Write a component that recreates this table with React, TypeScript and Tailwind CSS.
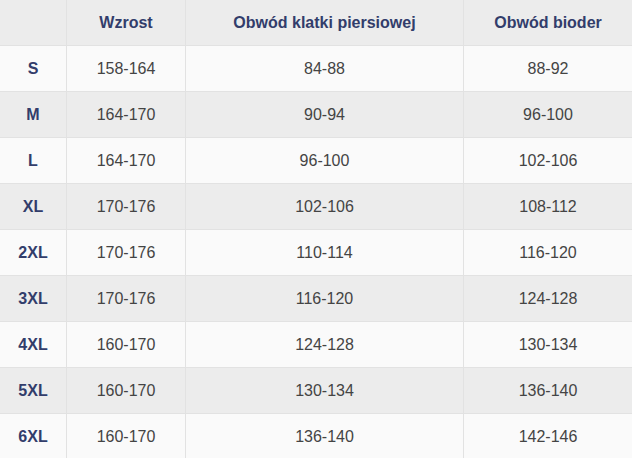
const rows = [
  ["S", "158-164", "84-88", "88-92"],
  ["M", "164-170", "90-94", "96-100"],
  ["L", "164-170", "96-100", "102-106"],
  ["XL", "170-176", "102-106", "108-112"],
  ["2XL", "170-176", "110-114", "116-120"],
  ["3XL", "170-176", "116-120", "124-128"],
  ["4XL", "160-170", "124-128", "130-134"],
  ["5XL", "160-170", "130-134", "136-140"],
  ["6XL", "160-170", "136-140", "142-146"],
];

const grid = "grid grid-cols-[66px_119px_278px_169px]";

export default function App() {
  return (
    <div className="w-[632px] h-[458px] overflow-hidden bg-[#fafafa] font-['Liberation_Sans',Arial,sans-serif] text-[16px]">
      {/* header */}
      <div className={`${grid} h-[45px] bg-[#ececec] font-bold text-[#323d6b]`}>
        <div />
        <div className="flex items-center justify-center border-l border-[#e2e2e2]">Wzrost</div>
        <div className="flex items-center justify-center border-l border-[#e2e2e2]">Obwód klatki piersiowej</div>
        <div className="flex items-center justify-center border-l border-[#e2e2e2]">Obwód bioder</div>
      </div>

      {rows.map((r, i) => (
        <div
          key={r[0]}
          className={`${grid} h-[46px] border-t border-[#e2e2e2] ${i % 2 === 0 ? "bg-[#fafafa]" : "bg-[#ececec]"}`}
        >
          <div className="flex items-center justify-center font-bold text-[#323d6b]">{r[0]}</div>
          <div className="flex items-center justify-center border-l border-[#e2e2e2] text-[#444]">{r[1]}</div>
          <div className="flex items-center justify-center border-l border-[#e2e2e2] text-[#444]">{r[2]}</div>
          <div className="flex items-center justify-center border-l border-[#e2e2e2] text-[#444]">{r[3]}</div>
        </div>
      ))}
    </div>
  );
}
